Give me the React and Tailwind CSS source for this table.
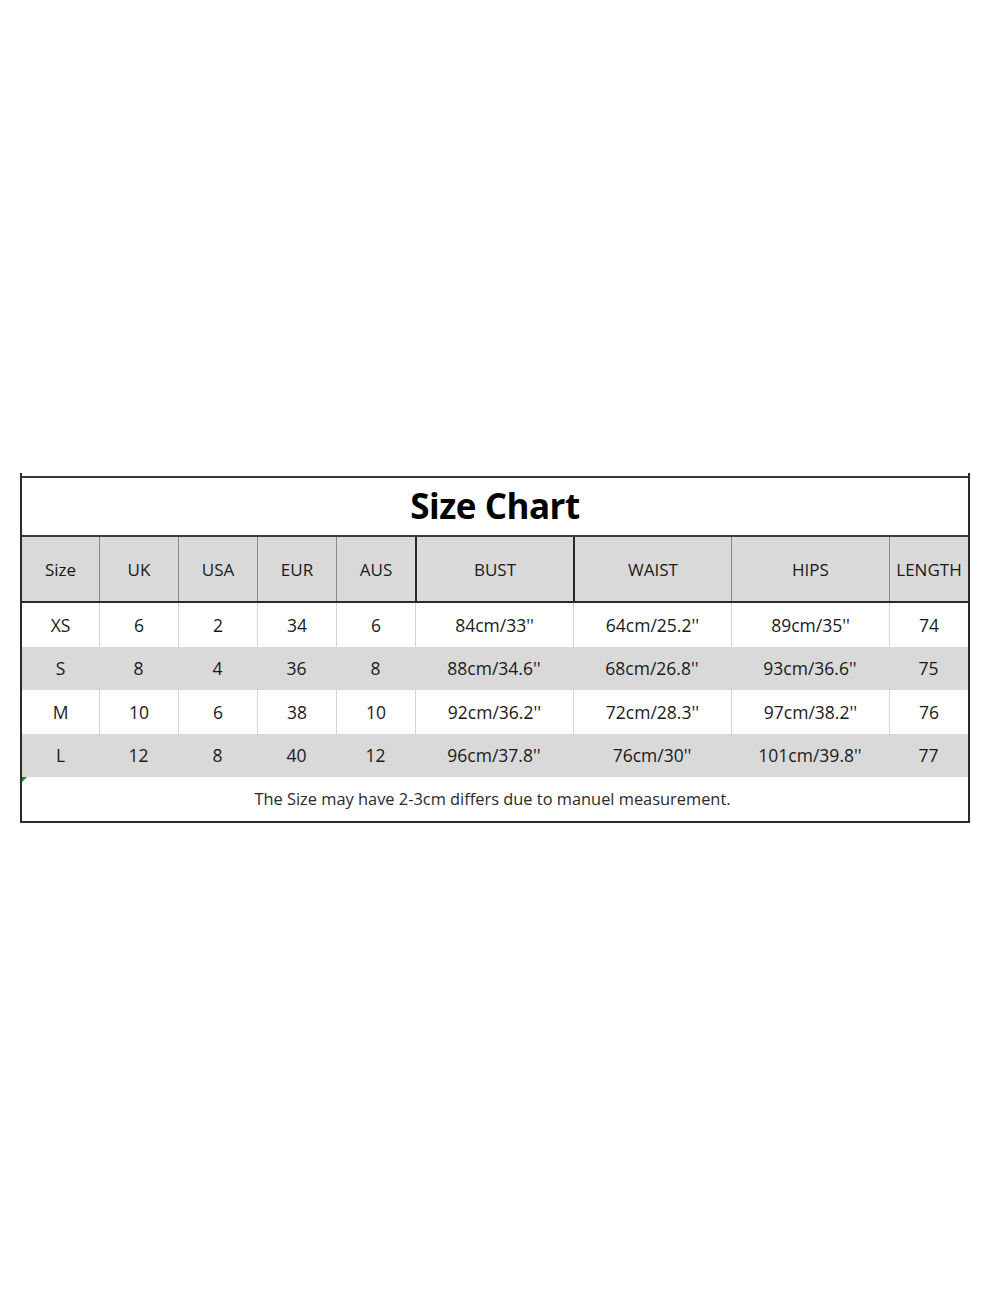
import React from 'react';

const headers = ['Size', 'UK', 'USA', 'EUR', 'AUS', 'BUST', 'WAIST', 'HIPS', 'LENGTH'];

const rows = [
    ['XS', '6', '2', '34', '6', '84cm/33\'\'', '64cm/25.2\'\'', '89cm/35\'\'', '74'],
    ['S', '8', '4', '36', '8', '88cm/34.6\'\'', '68cm/26.8\'\'', '93cm/36.6\'\'', '75'],
    ['M', '10', '6', '38', '10', '92cm/36.2\'\'', '72cm/28.3\'\'', '97cm/38.2\'\'', '76'],
    ['L', '12', '8', '40', '12', '96cm/37.8\'\'', '76cm/30\'\'', '101cm/39.8\'\'', '77'],
];

// garis pemisah kolom di header: sebagian hitam, sebagian abu-abu
const headerBorder = ['', 'border-l border-l-[#8a8a8a]', 'border-l border-l-[#8a8a8a]', 'border-l border-l-[#8a8a8a]', 'border-l border-l-[#8a8a8a]', 'border-l-2 border-l-[#2a2a2a]', 'border-l-2 border-l-[#2a2a2a]', 'border-l border-l-[#8a8a8a]', 'border-l border-l-[#8a8a8a]'];

const cols = 'grid grid-cols-[77px_79px_79px_79px_79px_158px_158px_158px_1fr]';

const App = () => {
    return (
        <div className="min-h-[1309px] bg-white pt-[473px] text-[#1a1a1a]" style={{ fontFamily: '"Open Sans", "Noto Sans", sans-serif' }}>
            <div className="ml-[20px] w-[950px] h-[3px] border-l-2 border-r-2 border-[#2a2a2a]" />
            <div className="ml-[20px] w-[950px] border-l-2 border-r-2 border-b-2 border-[#2a2a2a]">
                {/* JUDUL */}
                <div className="h-[61px] border-t-2 border-b-2 border-[#3a3a3a] flex items-center justify-center">
                    <h1 className="text-[35px] font-bold text-black tracking-[-0.5px]">Size Chart</h1>
                </div>

                {/* HEADER KOLOM */}
                <div className={`${cols} h-[66px] bg-[#d9d9d9] border-b-2 border-[#2a2a2a]`}>
                    {headers.map((h, i) => (
                        <div key={h} className={`flex items-center justify-center pt-[2px] text-[17px] ${headerBorder[i]}`}>{h}</div>
                    ))}
                </div>

                {/* DATA */}
                {rows.map((r, ri) => (
                    <div key={r[0]} className={`${cols} h-[43.5px] ${ri % 2 === 1 ? 'bg-[#d9d9d9]' : 'bg-white'}`}>
                        {r.map((c, ci) => (
                            <div key={ci} className={`flex items-center justify-center text-[17.5px] ${ci > 0 && ri % 2 === 0 ? 'border-l border-l-[#c9d4e8]' : ''}`}>{c}</div>
                        ))}
                    </div>
                ))}

                {/* CATATAN */}
                <div className="relative h-[44px] flex items-center justify-center text-[16.4px] text-[#2a2a2a] pr-[5px]">
                    <span className="absolute left-0 top-0 w-0 h-0 border-t-[5px] border-t-[#1a8a1a] border-r-[5px] border-r-transparent" />
                    The Size may have 2-3cm differs due to manuel measurement.
                </div>
            </div>
        </div>
    );
};

export default App;
